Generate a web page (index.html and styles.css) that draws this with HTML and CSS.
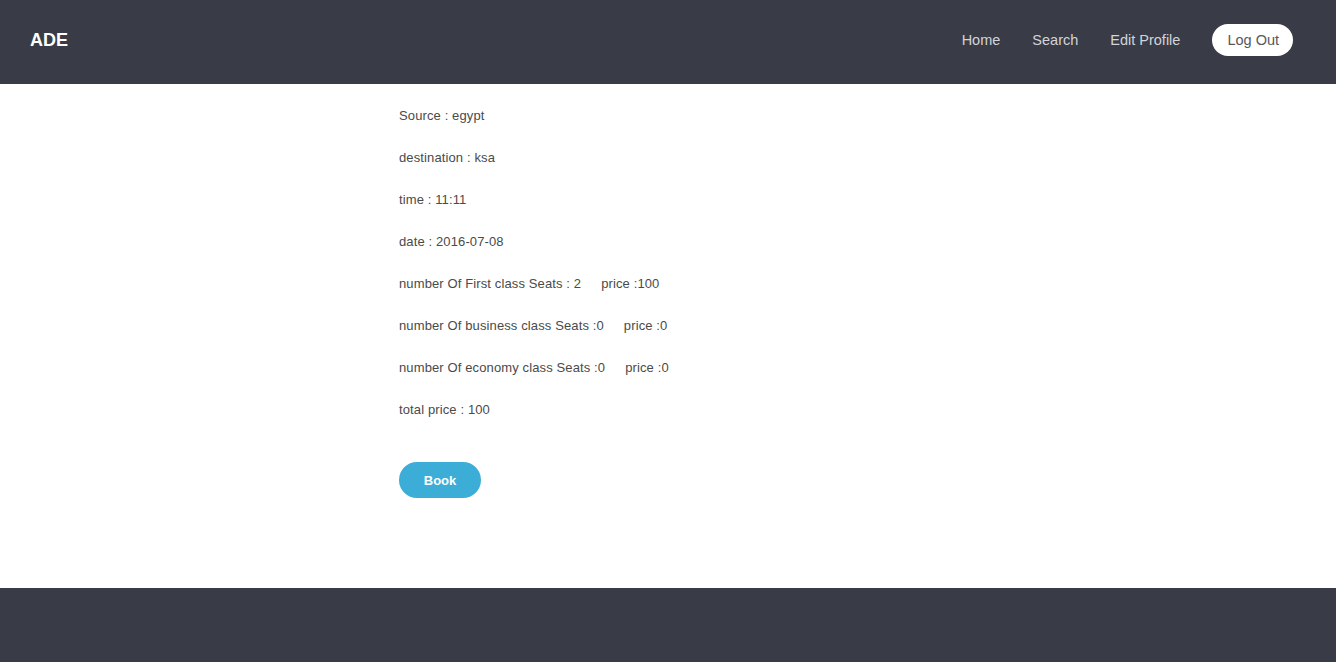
FILE: index.html
```html
<!DOCTYPE html>
<html>
<head>
<meta charset="utf-8">
<link rel="stylesheet" href="styles.css">
</head>
<body>
<header class="topbar">
  <div class="logo">ADE</div>
  <nav class="nav">
    <a class="nav-link" href="#">Home</a>
    <a class="nav-link" href="#">Search</a>
    <a class="nav-link" href="#">Edit Profile</a>
    <a class="nav-pill" href="#">Log Out</a>
  </nav>
</header>
<main class="content">
  <div class="details">
    <p class="row">Source : egypt</p>
    <p class="row">destination : ksa</p>
    <p class="row">time : 11:11</p>
    <p class="row">date : 2016-07-08</p>
    <p class="row">number Of First class Seats : 2<span class="price">price :100</span></p>
    <p class="row">number Of business class Seats :0<span class="price">price :0</span></p>
    <p class="row">number Of economy class Seats :0<span class="price">price :0</span></p>
    <p class="row">total price : 100</p>
    <button class="book">Book</button>
  </div>
</main>
<footer class="footer"></footer>
</body>
</html>
```

FILE: styles.css
```css
html, body {
  margin: 0;
  padding: 0;
  background: #ffffff;
  font-family: "Liberation Sans", Arial, sans-serif;
}

.topbar {
  height: 84px;
  background: #393c46;
  display: flex;
  align-items: center;
  justify-content: space-between;
  padding: 0 43px 4px 30px;
  box-sizing: border-box;
}

.logo {
  color: #ffffff;
  font-weight: bold;
  font-size: 18px;
}

.nav {
  display: flex;
  align-items: center;
  gap: 32px;
}

.nav-link {
  color: #d2d4d9;
  text-decoration: none;
  font-size: 14.5px;
}

.nav-pill {
  background: #ffffff;
  color: #555860;
  text-decoration: none;
  font-size: 14.5px;
  height: 32px;
  line-height: 32px;
  padding: 0 14px 0 15px;
  border-radius: 16px;
}

.content {
  height: 504px;
  box-sizing: border-box;
  padding: 22px 0 0 399px;
}

.details {
  display: flex;
  flex-direction: column;
  align-items: flex-start;
}

.row {
  margin: 0 0 22px 0;
  font-size: 13px;
  line-height: 20px;
  letter-spacing: 0.12px;
  color: #4a4a4a;
}

.price {
  margin-left: 20px;
}

.book {
  margin-top: 20px;
  width: 82px;
  height: 36px;
  border: none;
  border-radius: 18px;
  background: #3badd6;
  color: #ffffff;
  font-family: "Liberation Sans", Arial, sans-serif;
  font-weight: bold;
  font-size: 13px;
  padding: 0;
}

.footer {
  height: 74px;
  background: #393c46;
}
```
